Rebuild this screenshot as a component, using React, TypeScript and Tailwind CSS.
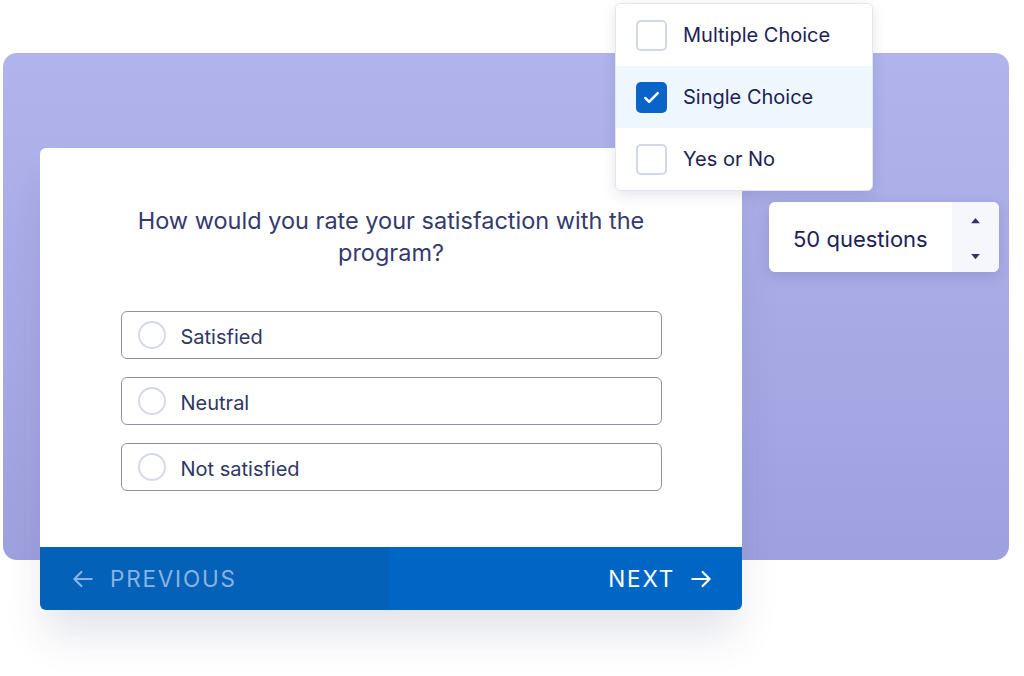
import * as React from "react";

const font = { fontFamily: "Inter, 'Noto Sans', sans-serif" };

function Checkbox({ checked }: { checked?: boolean }) {
  if (checked) {
    return (
      <span className="flex h-[31px] w-[31px] shrink-0 items-center justify-center rounded-[5px] bg-[#0a63c6]">
        <svg viewBox="0 0 24 24" className="h-[23px] w-[23px]" fill="none" stroke="white" strokeWidth="2.6" strokeLinecap="round" strokeLinejoin="round">
          <path d="M5.5 12.5l4 4L18.5 7.5" />
        </svg>
      </span>
    );
  }
  return <span className="h-[31px] w-[31px] shrink-0 rounded-[5px] border-2 border-[#d4d6ea] bg-white" />;
}

const types = [
  { label: "Multiple Choice", checked: false },
  { label: "Single Choice", checked: true },
  { label: "Yes or No", checked: false },
];

const options = ["Satisfied", "Neutral", "Not satisfied"];

export default function App() {
  return (
    <div className="relative h-[676px] w-[1024px] overflow-hidden bg-white" style={font}>
      {/* purple backdrop */}
      <div className="ml-[3px] mt-[53px] h-[507px] w-[1006px] rounded-[14px] bg-gradient-to-b from-[#b1b4ec] to-[#9ea1de]" />

      {/* question card */}
      <div className="absolute left-[40px] top-[148px] flex h-[462px] w-[702px] flex-col rounded-[6px] bg-white shadow-[0_30px_40px_-6px_rgba(40,45,90,0.13)]">
        <div className="flex flex-1 flex-col items-center pt-[57px]">
          <h2 className="w-[580px] text-center text-[23.5px] leading-[32px] text-[#343a6b]">
            How would you rate your satisfaction with the program?
          </h2>
          <div className="mt-[42px] flex w-[541px] flex-col gap-[18px]">
            {options.map((o) => (
              <div key={o} className="flex h-[48px] items-center rounded-[6px] border border-[#8e91a6] px-[16px]">
                <span className="h-[28px] w-[28px] rounded-full border-2 border-[#d7d9ea]" />
                <span className="ml-[15px] pt-[3px] text-[20px] text-[#2f3664]">{o}</span>
              </div>
            ))}
          </div>
        </div>
        <div className="flex h-[63px] overflow-hidden rounded-b-[6px]">
          <div className="flex w-[350px] items-center gap-[14px] bg-[#0461b8] pl-[30px] text-[22.5px] tracking-[0.08em] text-[#8bb3e4]">
            <svg viewBox="0 0 24 24" className="h-[26px] w-[26px]" fill="none" stroke="currentColor" strokeWidth="2" strokeLinecap="round" strokeLinejoin="round">
              <path d="M20 12H4M10.5 5.5L4 12l6.5 6.5" />
            </svg>
            PREVIOUS
          </div>
          <div className="flex flex-1 items-center justify-end gap-[13px] bg-[#0066c6] pr-[28px] text-[22.5px] tracking-[0.08em] text-white">
            NEXT
            <svg viewBox="0 0 24 24" className="h-[26px] w-[26px]" fill="none" stroke="currentColor" strokeWidth="2" strokeLinecap="round" strokeLinejoin="round">
              <path d="M4 12h16M13.5 5.5L20 12l-6.5 6.5" />
            </svg>
          </div>
        </div>
      </div>

      {/* question type dropdown */}
      <div className="absolute left-[615px] top-[3px] w-[258px] overflow-hidden rounded-[6px] border border-[#e3e5f1] bg-white shadow-[0_4px_14px_rgba(40,45,90,0.12)]">
        {types.map((t) => (
          <div key={t.label} className={`flex h-[62px] items-center gap-[16px] pl-[20px] ${t.checked ? "bg-[#eef7fe]" : "bg-white"}`}>
            <Checkbox checked={t.checked} />
            <span className="text-[20px] text-[#1d2256]">{t.label}</span>
          </div>
        ))}
      </div>

      {/* question count */}
      <div className="absolute left-[769px] top-[202px] flex h-[70px] w-[230px] overflow-hidden rounded-[6px] bg-white shadow-[0_4px_14px_rgba(40,45,90,0.15)]">
        <div className="flex flex-1 items-center pl-[24px] pt-[5px] text-[22px] text-[#1d2256]">50 questions</div>
        <div className="flex w-[47px] flex-col items-center justify-center gap-[29px] bg-[#f6f6fd] pt-[2px]">
          <svg viewBox="0 0 12 8" className="h-[7px] w-[11px]"><path d="M6 1L11 7H1z" fill="#2f3664" /></svg>
          <svg viewBox="0 0 12 8" className="h-[7px] w-[11px]"><path d="M6 7L11 1H1z" fill="#2f3664" /></svg>
        </div>
      </div>
    </div>
  );
}
